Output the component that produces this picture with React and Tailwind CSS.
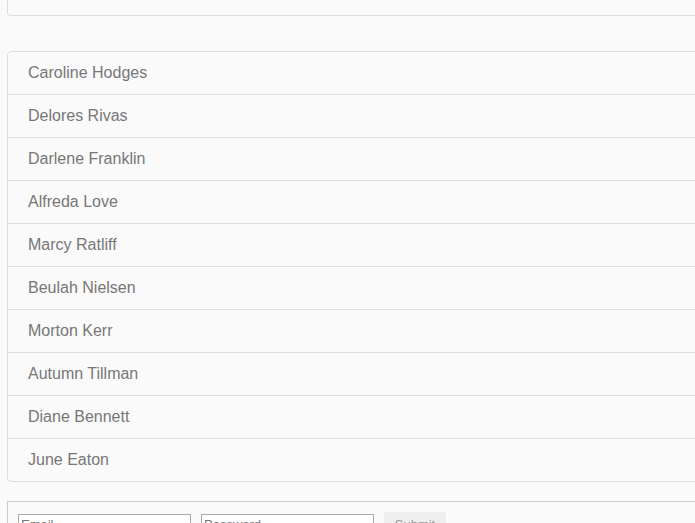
const people = [
  "Caroline Hodges",
  "Delores Rivas",
  "Darlene Franklin",
  "Alfreda Love",
  "Marcy Ratliff",
  "Beulah Nielsen",
  "Morton Kerr",
  "Autumn Tillman",
  "Diane Bennett",
  "June Eaton",
];

export default function App() {
  return (
    <div
      className="h-screen overflow-hidden bg-[#fafafa] pl-[7px]"
      style={{ fontFamily: '"Liberation Sans", Arial, sans-serif' }}
    >
      {/* top panel, mostly scrolled away */}
      <div className="h-[16px] w-[720px] border-x border-b border-[#dddddd] rounded-b-[4px] bg-[#fafafa]" />

      {/* LIST */}
      <div className="mt-[35px] w-[720px] border border-[#dddddd] rounded-[4px] bg-[#fafafa]">
        {people.map((name, i) => (
          <div
            key={name}
            className={`h-[42px] flex items-center pl-[20px] text-[16px] text-[#777777] ${
              i < people.length - 1 ? "box-content border-b border-[#dddddd]" : ""
            }`}
          >
            {name}
          </div>
        ))}
      </div>

      {/* FORM */}
      <div className="mt-[19px] w-[720px] h-[60px] border border-[#cccccc] bg-[#fafafa] pl-[10px] pt-[10px]">
        <form className="flex items-start gap-[10px]">
          <input
            placeholder="Email"
            className="mt-[2px] w-[173px] h-[20px] border border-[#aaaaaa] bg-white px-[2px] text-[13px] placeholder:text-[#777777]"
          />
          <input
            placeholder="Password"
            className="mt-[2px] w-[173px] h-[20px] border border-[#aaaaaa] bg-white px-[2px] text-[13px] placeholder:text-[#777777]"
          />
          <button
            type="button"
            className="w-[62px] h-[26px] rounded-[3px] bg-[#eeeeee] text-[13px] text-[#999999]"
          >
            Submit
          </button>
        </form>
      </div>
    </div>
  );
}
